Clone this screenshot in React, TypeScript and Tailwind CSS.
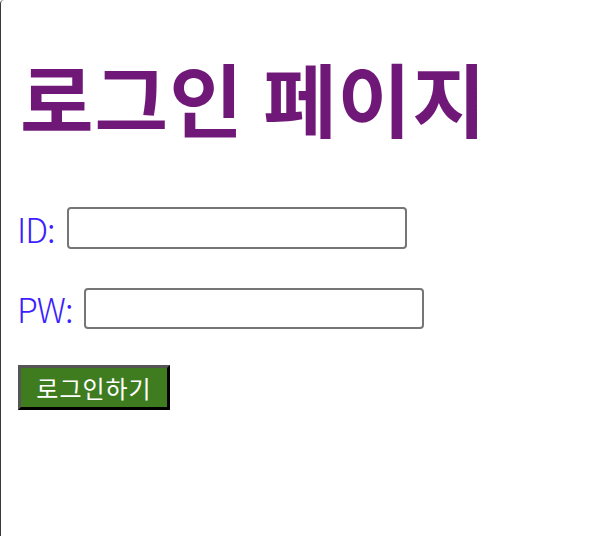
import React from 'react';

export default function App() {
  return (
    <div className="min-h-[536px] border-l border-[#3a3a3a] rounded-tl-sm px-[19px] pt-[48px] font-['Noto_Sans_CJK_KR',sans-serif]">
      <h1 className="text-[80px] leading-[1.2] font-bold text-[#701878] tracking-[1px]">
        로그인 페이지
      </h1>
      <form className="mt-[63px] flex flex-col" onSubmit={e => e.preventDefault()}>
        <div className="flex items-center h-[42px]">
          <label className="-ml-[3px] text-[34px] text-[#3c1eff] font-light mr-[12px] tracking-[-1px]">ID:</label>
          <input
            type="text"
            className="w-[340px] h-[42px] border-2 border-[#767676] rounded-[4px] bg-white outline-none px-2"
          />
        </div>
        <div className="flex items-center h-[41px] mt-[39px]">
          <label className="-ml-[3px] text-[34px] text-[#3c1eff] font-light mr-[12px] tracking-[-1px]">PW:</label>
          <input
            type="password"
            className="w-[340px] h-[41px] border-2 border-[#767676] rounded-[4px] bg-white outline-none px-2"
          />
        </div>
        <div className="mt-[36px]">
          <button
            type="submit"
            className="h-[45px] w-[152px] -ml-[2px] border-[3px] border-t-[#555555] border-l-[#555555] border-r-black border-b-black bg-[#3f7c1f] text-white text-[24px] tracking-[1px] leading-none"
          >
            로그인하기
          </button>
        </div>
      </form>
    </div>
  );
}
